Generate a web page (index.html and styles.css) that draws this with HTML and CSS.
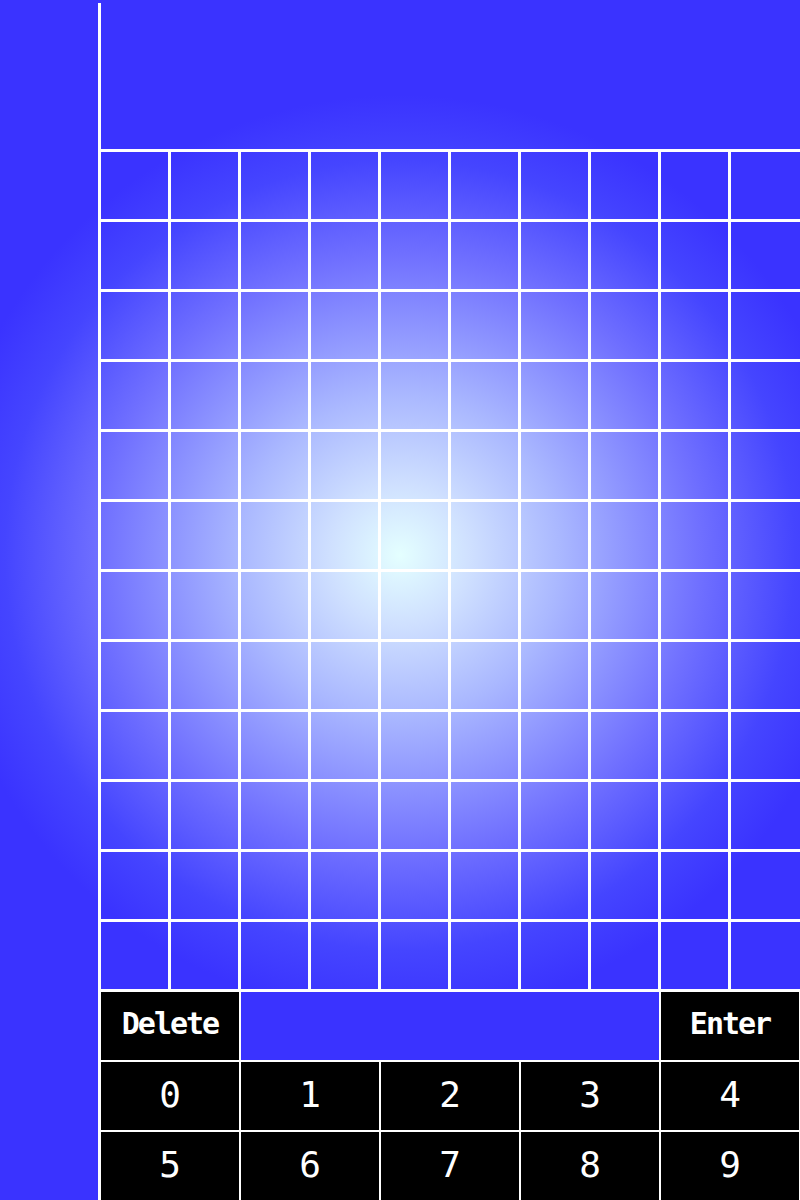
FILE: index.html
```html
<!DOCTYPE html>
<html>
<head>
<meta charset="utf-8">
<link rel="stylesheet" href="styles.css">
</head>
<body>
<div class="app">
  <div class="top"></div>
  <div class="board" id="board"></div>
  <div class="keypad">
    <div class="key word">Delete</div>
    <div class="display"></div>
    <div class="key word">Enter</div>
    <div class="key">0</div>
    <div class="key">1</div>
    <div class="key">2</div>
    <div class="key">3</div>
    <div class="key">4</div>
    <div class="key">5</div>
    <div class="key">6</div>
    <div class="key">7</div>
    <div class="key">8</div>
    <div class="key">9</div>
  </div>
</div>
<script>
  var b = document.getElementById('board');
  for (var i = 0; i < 120; i++) {
    var c = document.createElement('div');
    c.className = 'cell';
    b.appendChild(c);
  }
</script>
</body>
</html>
```

FILE: styles.css
```css
html, body {
  margin: 0;
  padding: 0;
  width: 800px;
  height: 1200px;
  overflow: hidden;
}

body {
  background: radial-gradient(circle at 400px 555px, #e4ffff 0px, #cfe0ff 70px, #aab8ff 160px, #7070ff 300px, #4545ff 395px, #3a33ff 460px);
  font-family: "DejaVu Sans Mono", "Liberation Mono", monospace;
  color: #fff;
}

.app {
  margin-left: 98px;
  margin-top: 3px;
  border-left: 3px solid #fff;
  height: 1197px;
  width: 702px;
}

.top {
  height: 146px;
}

.board {
  display: grid;
  grid-template-columns: repeat(10, 70px);
  grid-auto-rows: 70px;
  border-top: 3px solid #fff;
  width: 700px;
}

.cell {
  box-sizing: border-box;
  border-right: 3px solid #fff;
  border-bottom: 3px solid #fff;
}

.cell:nth-child(10n) {
  border-right: none;
}

.keypad {
  display: grid;
  grid-template-columns: repeat(5, 140px);
  grid-template-rows: repeat(3, 70px);
  width: 700px;
}

.key {
  box-sizing: border-box;
  background: #000;
  border-right: 2px solid #fff;
  border-bottom: 2px solid #fff;
  display: flex;
  align-items: center;
  justify-content: center;
  font-size: 36px;
  line-height: 1;
  padding-bottom: 2px;
}

.key.word {
  font-size: 30px;
  font-weight: bold;
  letter-spacing: -2px;
  padding-bottom: 4px;
}

.display {
  grid-column: span 3;
  box-sizing: border-box;
  background: #3a33ff;
  border-right: 2px solid #fff;
  border-bottom: 2px solid #fff;
}
```
